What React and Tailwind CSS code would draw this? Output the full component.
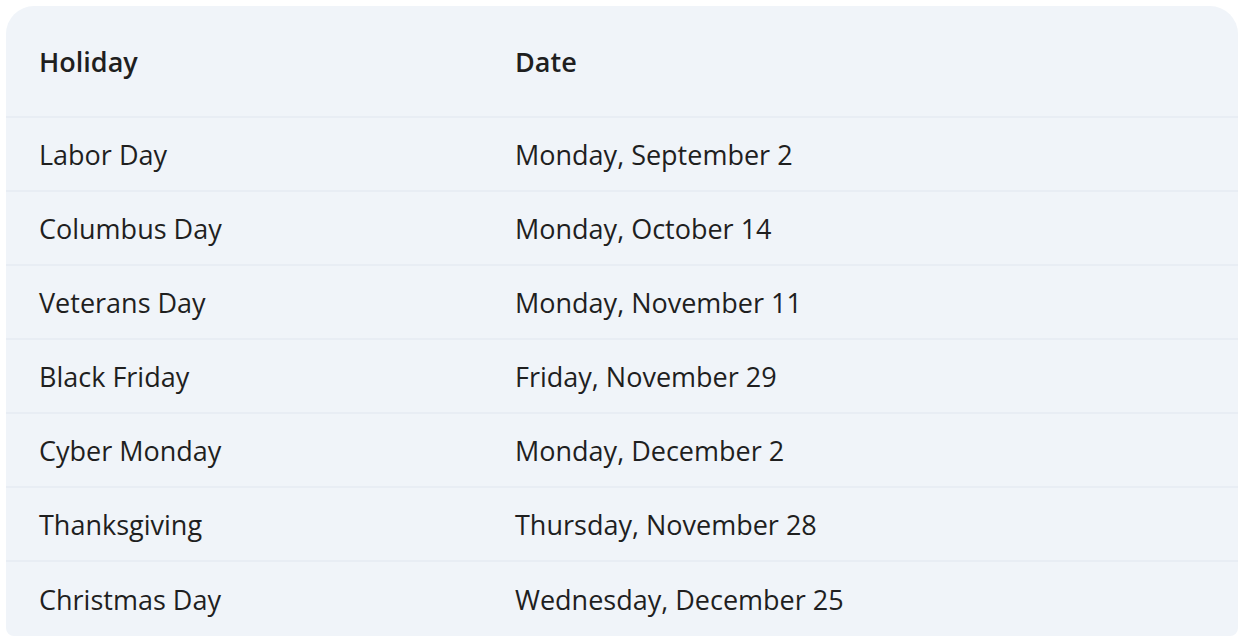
import React from 'react';

const holidays = [
  { name: 'Labor Day', date: 'Monday, September 2' },
  { name: 'Columbus Day', date: 'Monday, October 14' },
  { name: 'Veterans Day', date: 'Monday, November 11' },
  { name: 'Black Friday', date: 'Friday, November 29' },
  { name: 'Cyber Monday', date: 'Monday, December 2' },
  { name: 'Thanksgiving', date: 'Thursday, November 28' },
  { name: 'Christmas Day', date: 'Wednesday, December 25' },
];

const App = () => {
  return (
    <div className="bg-white pt-[6px] pl-[6px] pr-[10px] pb-[8px] font-['Open_Sans',sans-serif] text-[#1f1f1f]">
      <div className="bg-[#f0f4f9] rounded-t-[28px] rounded-b-[8px] overflow-hidden">
        {/* Header */}
        <div className="grid grid-cols-[509px_1fr] h-[112px] pt-[2px] items-center border-b-2 border-[#e8edf4]">
          <div className="pl-[33px] text-[27px] font-semibold">Holiday</div>
          <div className="text-[27px] font-semibold">Date</div>
        </div>

        {/* Rows */}
        {holidays.map((h, idx) => (
          <div
            key={idx}
            className={`grid grid-cols-[509px_1fr] h-[74px] pt-[2px] items-center ${idx < holidays.length - 1 ? 'border-b-2 border-[#e8edf4]' : ''}`}
          >
            <div className="pl-[33px] text-[27px]">{h.name}</div>
            <div className="text-[27px]">{h.date}</div>
          </div>
        ))}
      </div>
    </div>
  );
};

export default App;
